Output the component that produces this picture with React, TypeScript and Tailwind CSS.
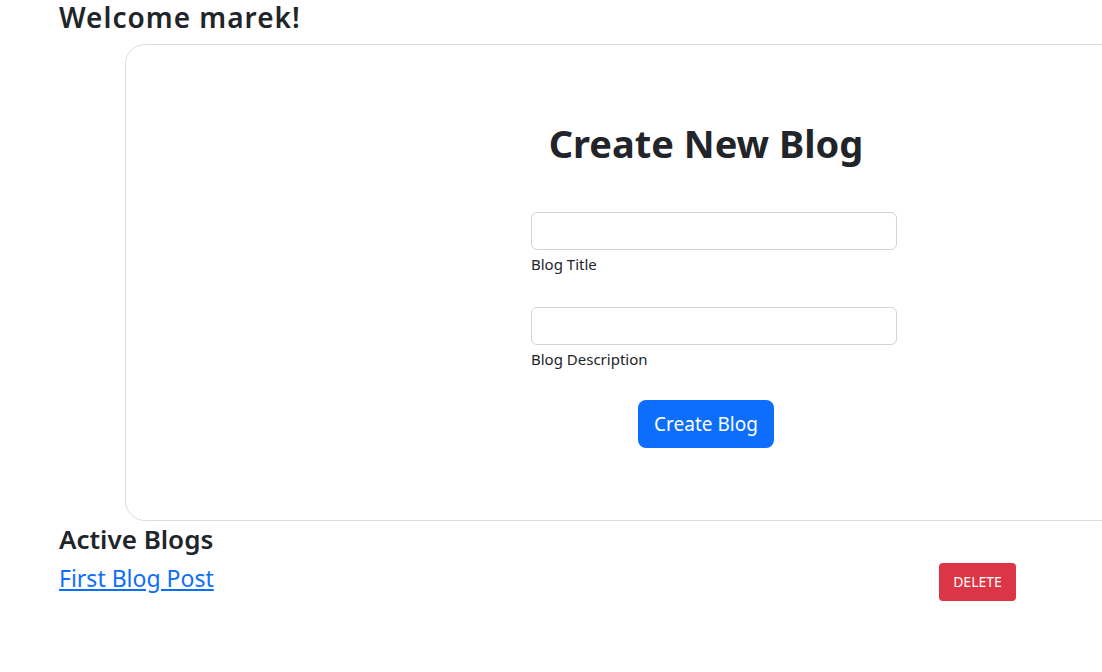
export default function App() {
  return (
    <div
      className="min-h-screen w-full overflow-hidden bg-white text-[#212529]"
      style={{ fontFamily: '"Noto Sans", "Open Sans", sans-serif' }}
    >
      <div className="pl-[59px]">
        {/* Header */}
        <h3 className="text-[28px] font-semibold leading-[1.2] tracking-[1px] pt-[1px] mb-[9px]">
          Welcome marek!
        </h3>

        {/* Create card */}
        <div className="ml-[66px] w-[1162px] h-[477px] rounded-[20px] border border-[#dcdcdc] bg-white">
          <h1 className="text-[38px] font-bold leading-[1.2] text-center mt-[76px]">
            Create New Blog
          </h1>

          <div className="w-[382px] mx-auto pl-[16px] mt-[46px]">
            <div>
              <input
                type="text"
                className="block w-[366px] h-[38px] rounded-[6px] border border-[#ced4da] bg-white px-3 outline-none"
              />
              <label className="block text-[15px] leading-[1.5] mt-[3px]">
                Blog Title
              </label>
            </div>

            <div className="mt-[31px]">
              <input
                type="text"
                className="block w-[366px] h-[38px] rounded-[6px] border border-[#ced4da] bg-white px-3 outline-none"
              />
              <label className="block text-[15px] leading-[1.5] mt-[3px]">
                Blog Description
              </label>
            </div>
          </div>

          <div className="flex justify-center mt-[30px]">
            <button className="h-[48px] w-[136px] rounded-[8px] bg-[#0d6efd] text-white text-[19px]">
              Create Blog
            </button>
          </div>
        </div>

        {/* Active blogs */}
        <h3 className="text-[26px] font-semibold leading-[1.2] mt-[3px]">
          Active Blogs
        </h3>

        <div className="flex items-start justify-between w-[957px] mt-[8px]">
          <a
            href="#"
            className="text-[23px] leading-[1.2] text-[#0d6efd] underline mt-[2px]"
          >
            First Blog Post
          </a>
          <button className="h-[38px] w-[77px] rounded-[4px] bg-[#dc3545] text-white text-[14px] uppercase">
            Delete
          </button>
        </div>
      </div>
    </div>
  );
}
